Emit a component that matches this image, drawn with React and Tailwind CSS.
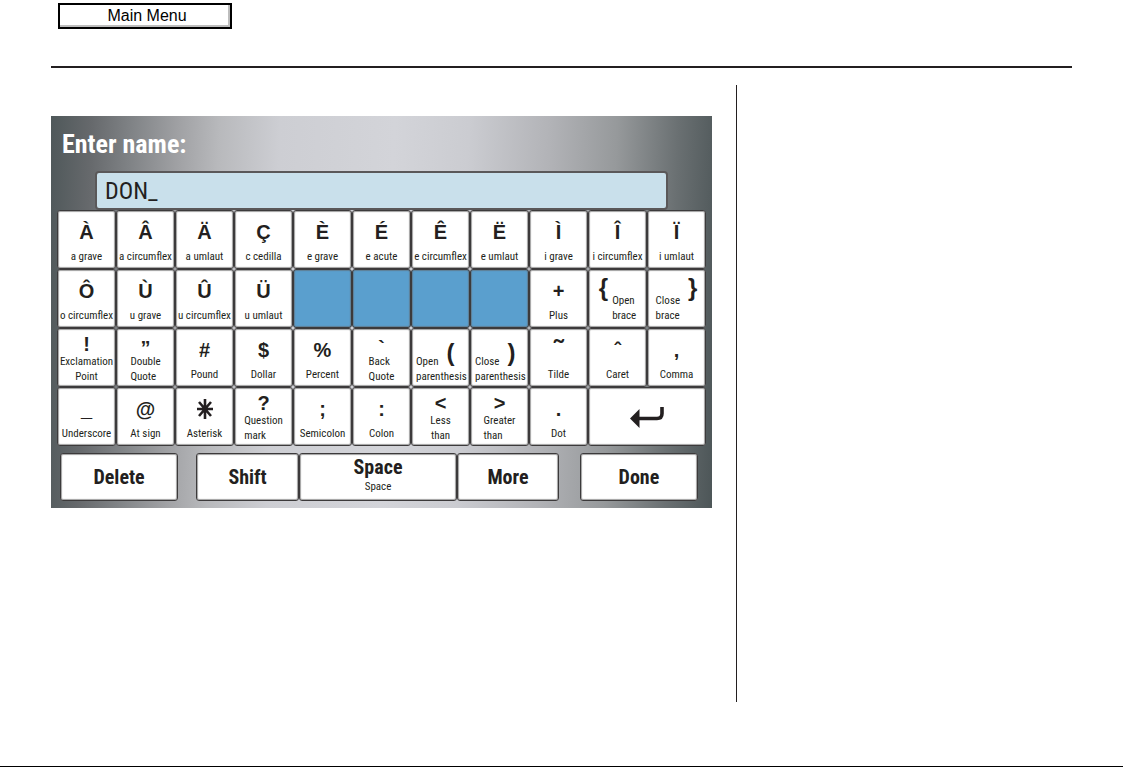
import { clsx } from 'clsx'

const Star = () => (
  <svg viewBox="0 0 18 22" className="h-[22px] w-[18px]" aria-hidden="true">
    <path d="M9 1v20M1 11h16M3 4l12 14M15 4l-12 14" fill="none" stroke="#231f20" strokeWidth="2.6" />
  </svg>
)

const Enter = () => (
  <svg viewBox="0 0 36 22" className="h-[22px] w-9" aria-hidden="true">
    <path d="M10.5 3v19L1 12.5z" fill="#231f20" />
    <path d="M9 12.5h19q5 0 5-5V1" fill="none" stroke="#231f20" strokeWidth="3.6" />
  </svg>
)

const keys = [
  { symbol: 'À', label: 'a grave' },
  { symbol: 'Â', label: 'a circumflex' },
  { symbol: 'Ä', label: 'a umlaut' },
  { symbol: 'Ç', label: 'c cedilla' },
  { symbol: 'È', label: 'e grave' },
  { symbol: 'É', label: 'e acute' },
  { symbol: 'Ê', label: 'e circumflex' },
  { symbol: 'Ë', label: 'e umlaut' },
  { symbol: 'Ì', label: 'i grave' },
  { symbol: 'Î', label: 'i circumflex' },
  { symbol: 'Ï', label: 'i umlaut' },
  { symbol: 'Ô', label: 'o circumflex' },
  { symbol: 'Ù', label: 'u grave' },
  { symbol: 'Û', label: 'u circumflex' },
  { symbol: 'Ü', label: 'u umlaut' },
  { blank: true },
  { blank: true },
  { blank: true },
  { blank: true },
  { symbol: '+', label: 'Plus' },
  { symbol: '{', lines: ['Open', 'brace'], side: 'left' },
  { symbol: '}', lines: ['Close', 'brace'], side: 'right' },
  { symbol: '!', lines: ['Exclamation', 'Point'], center: true },
  { symbol: '”', lines: ['Double', 'Quote'], low: true },
  { symbol: '#', label: 'Pound' },
  { symbol: '$', label: 'Dollar' },
  { symbol: '%', label: 'Percent' },
  { symbol: '`', lines: ['Back', 'Quote'], low: true },
  { symbol: '(', lines: ['Open', 'parenthesis'], side: 'inline' },
  { symbol: ')', lines: ['Close', 'parenthesis'], side: 'inline' },
  { symbol: '˜', label: 'Tilde', big: true },
  { symbol: 'ˆ', label: 'Caret' },
  { symbol: ',', label: 'Comma' },
  { symbol: '_', label: 'Underscore' },
  { symbol: '@', label: 'At sign' },
  { symbol: <Star />, label: 'Asterisk' },
  { symbol: '?', lines: ['Question', 'mark'] },
  { symbol: ';', label: 'Semicolon' },
  { symbol: ':', label: 'Colon' },
  { symbol: '<', lines: ['Less', 'than'], center: true },
  { symbol: '>', lines: ['Greater', 'than'] },
  { symbol: '.', label: 'Dot' }
]

const keyStyle =
  'rounded-[3px] border border-[#3c3a3b] bg-white text-[#231f20] shadow-[inset_0_0_1px_1px_#a0a0a0]'

const narrow = "font-['Liberation_Sans_Narrow','Roboto_Condensed','Liberation_Sans',sans-serif]"

const KeyContent = ({ item }) => {
  const { symbol, label, lines, side, center, low, big } = item

  if (side === 'inline') {
    return (
      <span className="flex h-full flex-col justify-end px-1 text-left">
        <span className="flex items-end gap-2">
          {lines[0]}
          <b className="font-['Liberation_Sans',sans-serif] text-2xl leading-8">{symbol}</b>
        </span>
        <span>{lines[1]}</span>
      </span>
    )
  }

  if (side) {
    return (
      <span className={clsx('flex h-full justify-center pt-1', side === 'right' ? 'flex-row-reverse gap-2' : 'gap-1')}>
        <b className="font-['Liberation_Sans',sans-serif] text-2xl leading-7">{symbol}</b>
        <span className="flex flex-col justify-end pb-[2px] text-left">
          <span>{lines[0]}</span>
          <span>{lines[1]}</span>
        </span>
      </span>
    )
  }

  return (
    <span className="flex h-full flex-col items-center pt-1">
      <b
        className={clsx(
          "flex min-h-0 flex-1 items-center font-['Liberation_Sans',sans-serif]",
          big ? 'text-[28px]' : 'text-xl',
          low ? 'pt-2 leading-3' : 'leading-5'
        )}
      >
        {symbol}
      </b>
      {lines ? (
        <span className={clsx('flex flex-col', center ? 'text-center' : 'text-left')}>
          <span>{lines[0]}</span>
          <span>{lines[1]}</span>
        </span>
      ) : (
        <span className="pb-[2px]">{label}</span>
      )}
    </span>
  )
}

const Key = ({ item }) => {
  if (item.blank) {
    return (
      <button
        type="button"
        disabled
        aria-label="Unavailable"
        className="rounded-[3px] border border-[#3c3a3b] bg-[#5a9fce] shadow-[inset_0_0_1px_1px_#5f7f96]"
      />
    )
  }
  return (
    <button type="button" className={clsx(keyStyle, 'min-w-0 pb-[2px] text-[11px] leading-[15px] whitespace-nowrap')}>
      <KeyContent item={item} />
    </button>
  )
}

const App = () => {
  return (
    <div className="flex min-h-screen w-full flex-col border-b border-black bg-white px-[51px]">
      <header className="border-b-2 border-[#231f20] px-[7px] pt-[3px] pb-[37px]">
        <button
          type="button"
          className="block h-[26px] w-[174px] border-2 border-black bg-white pl-1 font-['Liberation_Sans',sans-serif] text-base leading-5 text-black shadow-[inset_-2px_-2px_0_#bdbdbd]"
        >
          Main Menu
        </button>
      </header>

      <main className="mt-[17px] mb-16 flex flex-1">
        <div className="min-w-0 flex-1 border-r border-[#231f20] pt-[31px] pr-6">
          <section
            className={clsx(
              narrow,
              'bg-[linear-gradient(92deg,#4f585a_0%,#66696c_6%,#808386_12%,#a0a1a4_19%,#b8b9bc_25%,#cdced3_34%,#d3d4d9_51%,#cbccd1_62%,#b2b3b7_74%,#96999b_84%,#6a7072_93%,#4d5658_100%)] px-[6px] pt-3 pb-[7px]'
            )}
          >
            <label htmlFor="name" className="block px-[5px] text-[26px] leading-8 font-bold text-white">
              Enter name:
            </label>
            <div className="mt-[11px] px-[38px]">
              <input
                id="name"
                type="text"
                defaultValue="DON_"
                className="block h-[39px] w-full rounded-[4px] border-2 border-[#5a5859] bg-[#c9e0eb] px-2 text-2xl text-[#231f20] outline-none"
              />
            </div>

            <div className="grid auto-rows-[59px] grid-cols-11">
              {keys.map((item, index) => (
                <Key key={index} item={item} />
              ))}
              <button type="button" aria-label="Enter" className={clsx(keyStyle, 'col-span-2 flex items-center justify-center')}>
                <Enter />
              </button>
            </div>

            <div className="mt-[7px] flex h-12 pr-2 pl-[3px] text-xl leading-5 font-bold">
              <button type="button" className={clsx(keyStyle, 'flex-[118]')}>Delete</button>
              <div className="flex-[18]" />
              <button type="button" className={clsx(keyStyle, 'flex-[103]')}>Shift</button>
              <button type="button" className={clsx(keyStyle, 'flex-[158]')}>
                Space
                <span className="block text-[11px] font-normal">Space</span>
              </button>
              <button type="button" className={clsx(keyStyle, 'flex-[102]')}>More</button>
              <div className="flex-[21]" />
              <button type="button" className={clsx(keyStyle, 'flex-[118]')}>Done</button>
            </div>
          </section>
        </div>
        <aside className="w-[335px]" />
      </main>
    </div>
  )
}

export default App
